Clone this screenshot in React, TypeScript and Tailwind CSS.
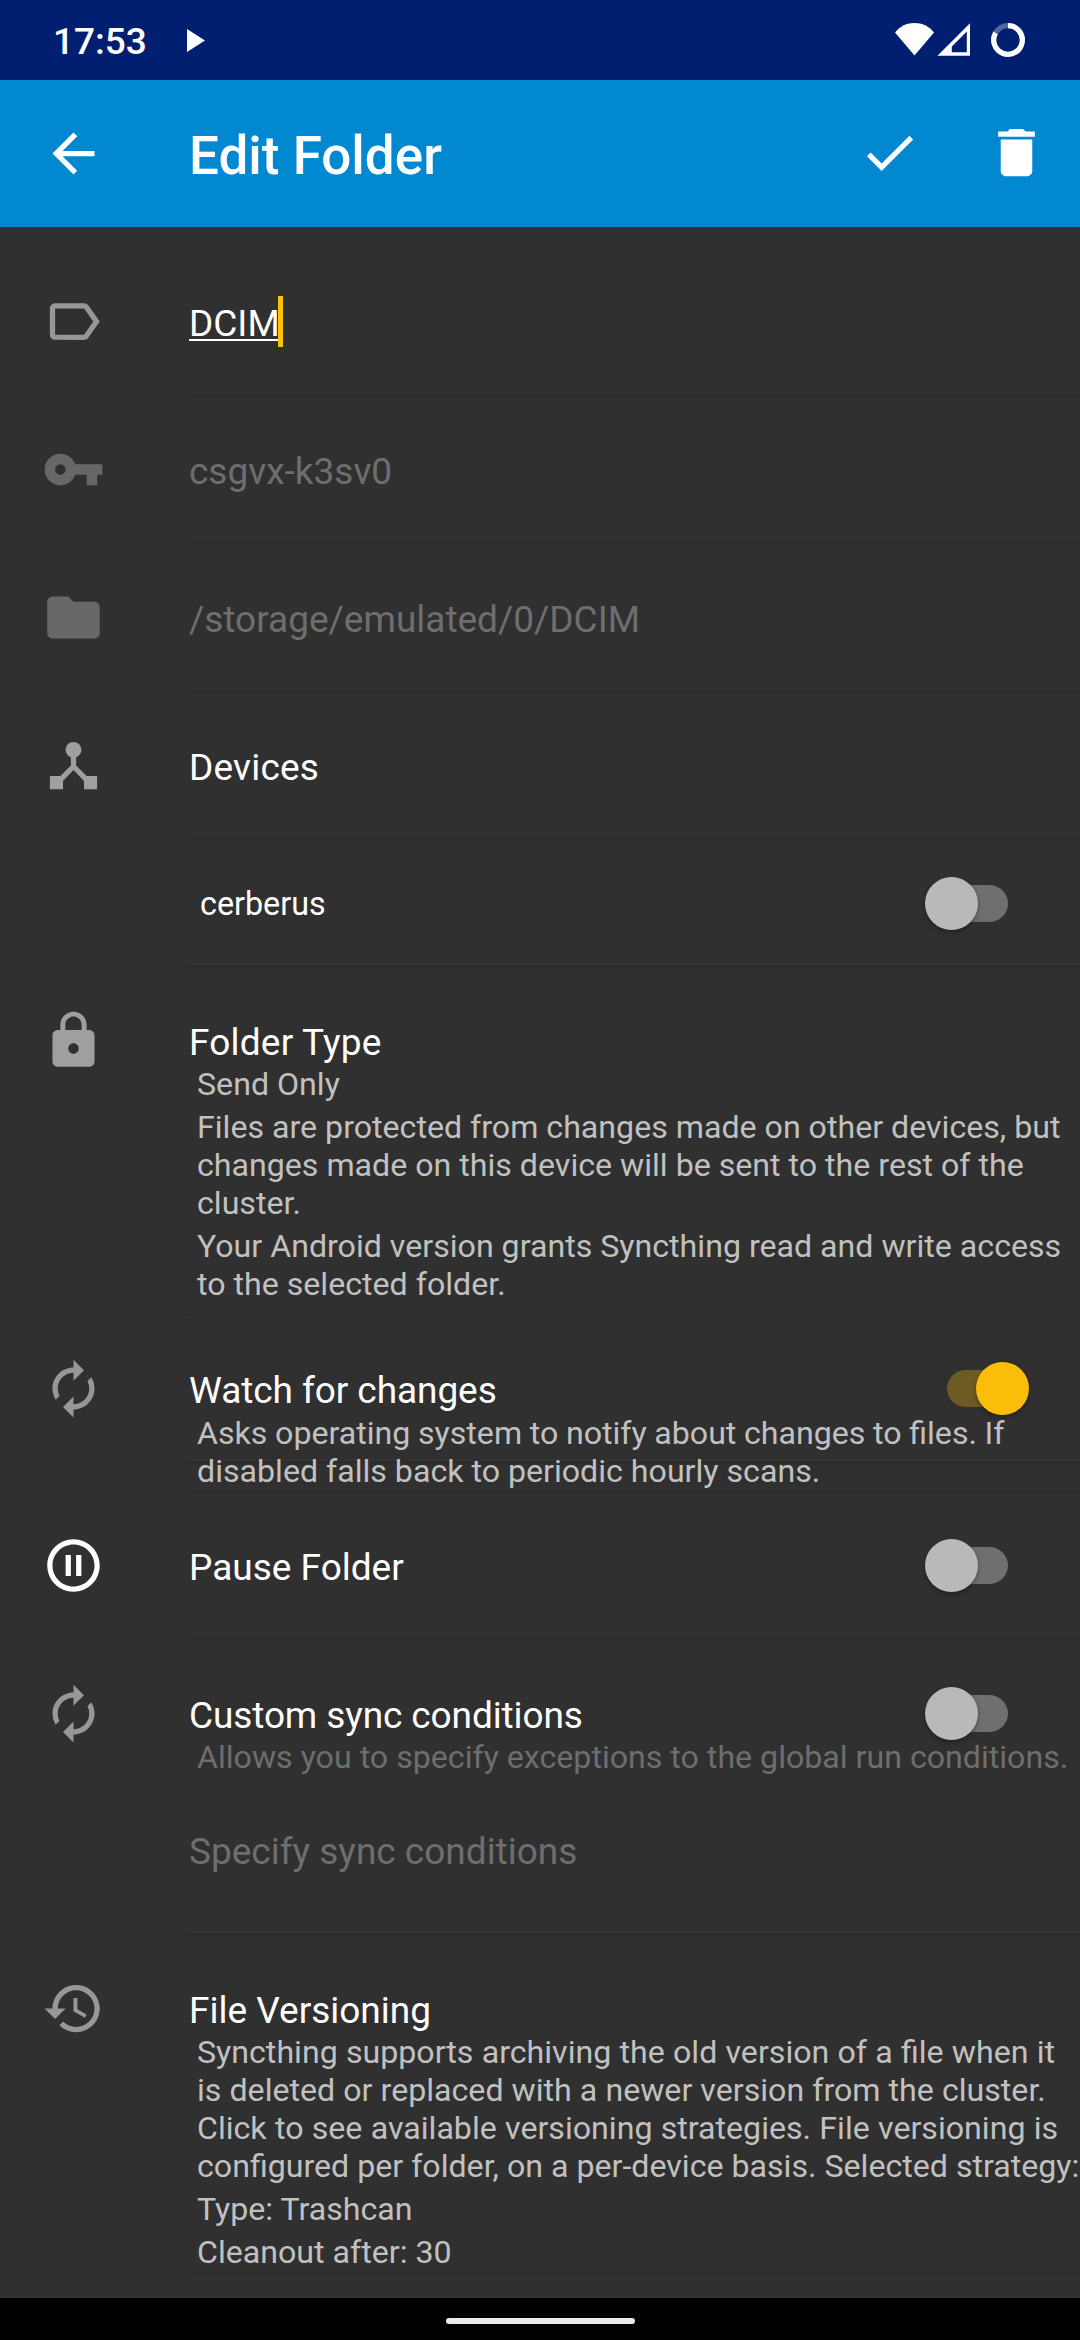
import React from "react";

const ICONS = {
  back: "M20 11H7.83l5.59-5.59L12 4l-8 8 8 8 1.41-1.41L7.83 13H20v-2z",
  check: "M9 16.17L4.83 12l-1.42 1.41L9 19 21 7l-1.41-1.41z",
  trash: "M6 19c0 1.1.9 2 2 2h8c1.1 0 2-.9 2-2V7H6v12zM19 4h-3.5l-1-1h-5l-1 1H5v2h14V4z",
  label:
    "M17.63 5.84C17.27 5.33 16.67 5 16 5L5 5.01C3.9 5.01 3 5.9 3 7v10c0 1.1.9 1.99 2 1.99L16 19c.67 0 1.27-.33 1.63-.84L22 12l-4.37-6.16zM16 17H5V7h11l3.55 5L16 17z",
  key: "M12.65 10C11.83 7.67 9.61 6 7 6c-3.31 0-6 2.69-6 6s2.69 6 6 6c2.61 0 4.83-1.67 5.65-4H17v4h4v-4h2v-4H12.65zM7 14c-1.1 0-2-.9-2-2s.9-2 2-2 2 .9 2 2-.9 2-2 2z",
  folder: "M10 4H4c-1.1 0-1.99.9-1.99 2L2 18c0 1.1.9 2 2 2h16c1.1 0 2-.9 2-2V8c0-1.1-.9-2-2-2h-8l-2-2z",
  hub: "M17 16l-4-4V8.82C14.16 8.4 15 7.3 15 6c0-1.66-1.34-3-3-3S9 4.34 9 6c0 1.3.84 2.4 2 2.82V12l-4 4H3v5h5v-3.05l4-4.2 4 4.2V21h5v-5h-4z",
  lock: "M18 8h-1V6c0-2.76-2.24-5-5-5S7 3.24 7 6v2H6c-1.1 0-2 .9-2 2v10c0 1.1.9 2 2 2h12c1.1 0 2-.9 2-2V10c0-1.1-.9-2-2-2zm-6 9c-1.1 0-2-.9-2-2s.9-2 2-2 2 .9 2 2-.9 2-2 2zm3.1-9H8.9V6c0-1.71 1.39-3.1 3.1-3.1 1.71 0 3.1 1.39 3.1 3.1v2z",
  renew:
    "M12 6v3l4-4-4-4v3c-4.42 0-8 3.58-8 8 0 1.57.46 3.03 1.24 4.26L6.7 14.8c-.45-.83-.7-1.79-.7-2.8 0-3.31 2.69-6 6-6zm6.76 1.74L17.3 9.2c.44.84.7 1.79.7 2.8 0 3.31-2.69 6-6 6v-3l-4 4 4 4v-3c4.42 0 8-3.58 8-8 0-1.57-.46-3.03-1.24-4.26z",
  pause:
    "M9 16h2V8H9v8zm3-14C6.48 2 2 6.48 2 12s4.48 10 10 10 10-4.48 10-10S17.52 2 12 2zm0 18c-4.41 0-8-3.59-8-8s3.59-8 8-8 8 3.59 8 8-3.59 8-8 8zm1-4h2V8h-2v8z",
  history:
    "M13 3c-4.97 0-9 4.03-9 9H1l3.89 3.89.07.14L9 12H6c0-3.87 3.13-7 7-7s7 3.13 7 7-3.13 7-7 7c-1.93 0-3.68-.79-4.94-2.06l-1.42 1.42C8.27 19.99 10.51 21 13 21c4.97 0 9-4.03 9-9s-4.03-9-9-9zm-1 5v5l4.28 2.54.72-1.21-3.5-2.08V8H12z",
};

type IconName = keyof typeof ICONS;

function Icon({ name, className = "" }: { name: IconName; className?: string }) {
  return (
    <svg viewBox="0 0 24 24" fill="currentColor" className={`size-[63px] shrink-0 ${className}`}>
      <path d={ICONS[name]} />
    </svg>
  );
}

function Switch({ on = false }: { on?: boolean }) {
  return (
    <div className="relative h-[53px] w-[104px] shrink-0">
      <div
        className={`absolute top-2 left-[21.5px] h-[37px] w-[61.5px] rounded-full ${on ? "bg-[#6e5a23]" : "bg-[#6f6f6f]"}`}
      />
      <div
        className={`absolute top-0 size-[53px] rounded-full shadow-[0_2px_4px_rgba(0,0,0,0.35)] ${on ? "left-[51px] bg-[#fabd0a]" : "left-0 bg-[#b9b9b9]"}`}
      />
    </div>
  );
}

function Row({
  icon,
  iconClass = "text-[#979797]",
  height = "h-[148px]",
  divider = true,
  children,
}: {
  icon?: IconName;
  iconClass?: string;
  height?: string;
  divider?: boolean;
  children?: React.ReactNode;
}) {
  return (
    <div className={`flex shrink-0 ${height}`}>
      <div className="w-[189px] shrink-0 pt-[42px] pl-[42px]">{icon && <Icon name={icon} className={iconClass} />}</div>
      <div className={`min-w-0 flex-1 ${divider ? "border-b border-[#292929]" : ""}`}>{children}</div>
    </div>
  );
}

function Title({ children, className = "text-white" }: { children: React.ReactNode; className?: string }) {
  return <div className={`pt-[54px] text-[37px] leading-[43px] whitespace-nowrap ${className}`}>{children}</div>;
}

function TitleWithSwitch({ title, on, className }: { title: string; on?: boolean; className?: string }) {
  return (
    <div className="flex h-[97px] items-start justify-between pr-[51px]">
      <Title className={className}>{title}</Title>
      <div className="pt-[47px]">
        <Switch on={on} />
      </div>
    </div>
  );
}

function Text({ children, className = "text-[#c1c1c1]" }: { children: React.ReactNode; className?: string }) {
  return (
    <div className={`relative pl-2 text-[32.15px] leading-[38px] whitespace-nowrap ${className}`}>{children}</div>
  );
}

export default function App() {
  return (
    <div className="flex h-[2340px] w-[1080px] flex-col overflow-hidden bg-[#303030] font-[Roboto,sans-serif]">
      {/* Status bar */}
      <div className="flex h-20 shrink-0 items-start bg-[#001f70] pl-[53px] text-white">
        <span className="mt-5 w-[134px] text-[37px] leading-[43px] font-medium">17:53</span>
        <svg viewBox="0 0 18 23" className="mt-[29px] h-[23px] w-[18px]" fill="currentColor">
          <path d="M0 0L18 11.5L0 23z" />
        </svg>
        <div className="mt-[23px] mr-[55px] ml-auto flex">
          <svg viewBox="0 0 39 34" className="h-[34px] w-[39px]" fill="currentColor">
            <path d="M0 9.4C5 3.2 12 0 19.5 0S34 3.2 39 9.4L19.5 32.5z" />
          </svg>
          <svg viewBox="0 0 33 34" className="ml-[3px] h-[34px] w-[33px]" fill="currentColor">
            <path fillRule="evenodd" d="M0.4 32.8L33 .3V32.8zM14.8 23.6V29.3H29.8V8.4z" />
          </svg>
          <svg viewBox="0 0 34 34" className="ml-[21px] h-[34px] w-[34px]" fill="none" stroke="currentColor" strokeWidth="5.2">
            <circle cx="17" cy="17" r="14.3" opacity="0.32" />
            <path d="M17 2.7A14.3 14.3 0 1 1 4.6 9.9" />
          </svg>
        </div>
      </div>

      {/* App bar */}
      <div className="flex h-[147px] shrink-0 items-start bg-[#0288d1] pl-[42px] text-white">
        <Icon name="back" className="mt-[42px]" />
        <h1 className="mt-[45px] ml-[84px] text-[53px] leading-[62px] font-medium">Edit Folder</h1>
        <Icon name="check" className="mt-[41px] ml-auto" />
        <Icon name="trash" className="mt-[41px] mr-8 ml-16" />
      </div>

      {/* Form */}
      <div className="flex min-h-0 flex-1 flex-col overflow-hidden pt-[21px]">
        <Row icon="label">
          <Title>
            <span className="relative inline-block underline decoration-2 underline-offset-[3px]">
              DCIM
              <span className="absolute -top-1.5 -right-[3px] h-[51px] w-[5px] bg-[#ffc107]" />
            </span>
          </Title>
        </Row>
        <Row icon="key" iconClass="text-[#676767]">
          <Title className="text-[#6e6e6e]">csgvx-k3sv0</Title>
        </Row>
        <Row icon="folder" iconClass="text-[#676767]">
          <Title className="text-[#6e6e6e]">/storage/emulated/0/DCIM</Title>
        </Row>
        <Row icon="hub" iconClass="text-[#9f9f9f]">
          <Title className="tracking-[0.2px] text-white">Devices</Title>
        </Row>
        <Row height="h-[127px]">
          <div className="flex justify-between pr-[51px] pl-[11px]">
            <span className="pt-[45px] text-[32.3px] leading-[38px] text-white">cerberus</span>
            <div className="pt-[37px]">
              <Switch />
            </div>
          </div>
        </Row>
        <Row icon="lock" iconClass="text-[#9f9f9f]" height="h-[348px]">
          <Title className="tracking-[0.2px] text-white">Folder Type</Title>
          <div className="flex flex-col gap-[5px] pt-px">
            <Text>Send Only</Text>
            <Text>
              <p>Files are protected from changes made on other devices, but</p>
              <p>changes made on this device will be sent to the rest of the</p>
              <p>cluster.</p>
            </Text>
            <Text>
              <p>Your Android version grants Syncthing read and write access</p>
              <p>to the selected folder.</p>
            </Text>
          </div>
        </Row>
        <Row icon="renew">
          <TitleWithSwitch title="Watch for changes" on className="tracking-[-0.07px] text-white" />
          <div className="pt-0.5">
            <Text>
              <p className="[word-spacing:-0.35px]">Asks operating system to notify about changes to files. If</p>
              <p>disabled falls back to periodic hourly scans.</p>
            </Text>
          </div>
        </Row>
        <Row height="h-[29px]" />
        <Row icon="pause" iconClass="text-white">
          <TitleWithSwitch title="Pause Folder" />
        </Row>
        <Row icon="renew" divider={false}>
          <TitleWithSwitch title="Custom sync conditions" className="tracking-[-0.11px] text-white" />
          <div className="pt-px">
            <Text className="text-[#6e6e6e]">Allows you to specify exceptions to the global run conditions.</Text>
          </div>
        </Row>
        <Row height="h-[147px]">
          <div className="pt-[42px] text-[37px] leading-[43px] text-[#6e6e6e]">Specify sync conditions</div>
        </Row>
        <Row icon="history" height="h-[338px]">
          <Title>File Versioning</Title>
          <div className="flex flex-col gap-[5px] pt-px">
            <Text>
              <p className="[word-spacing:0.26px]">Syncthing supports archiving the old version of a file when it</p>
              <p className="[word-spacing:0.1px]">is deleted or replaced with a newer version from the cluster.</p>
              <p className="[word-spacing:0.3px]">Click to see available versioning strategies. File versioning is</p>
              <p>configured per folder, on a per-device basis. Selected strategy:</p>
            </Text>
            <Text>Type: Trashcan</Text>
            <Text>Cleanout after: 30</Text>
          </div>
        </Row>
      </div>

      {/* Navigation bar */}
      <div className="flex h-[42px] shrink-0 justify-center bg-black pt-5">
        <div className="h-1.5 w-[189px] rounded-full bg-[#ebebeb]" />
      </div>
    </div>
  );
}
